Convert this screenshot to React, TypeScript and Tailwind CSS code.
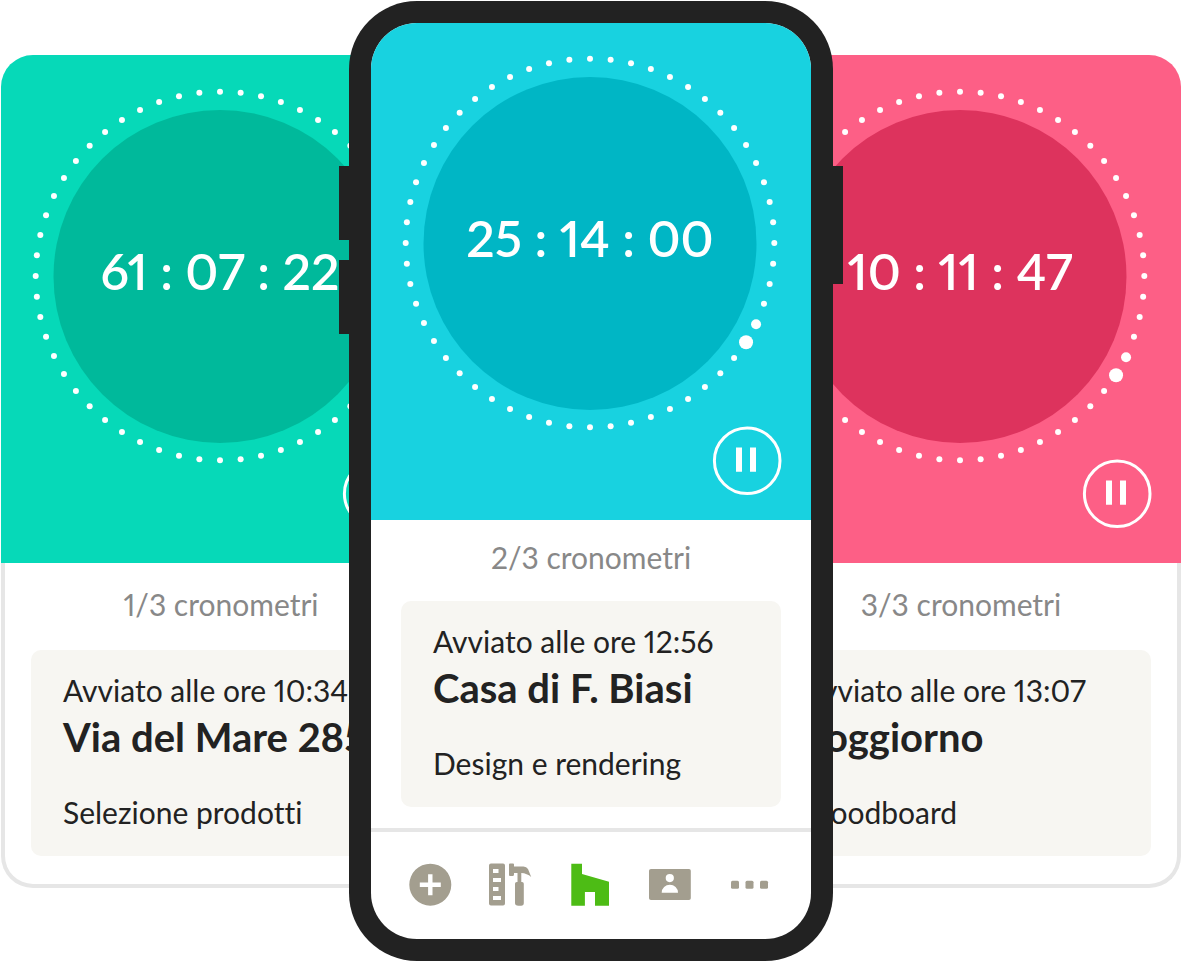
import type { ReactNode } from "react";

type Timer = {
  time: string;
  position: string;
  started: string;
  project: string;
  task: string;
};

const timers: Timer[] = [
  { time: "61 : 07 : 22", position: "1/3 cronometri", started: "Avviato alle ore 10:34", project: "Via del Mare 285", task: "Selezione prodotti" },
  { time: "25 : 14 : 00", position: "2/3 cronometri", started: "Avviato alle ore 12:56", project: "Casa di F. Biasi", task: "Design e rendering" },
  { time: "10 : 11 : 47", position: "3/3 cronometri", started: "Avviato alle ore 13:07", project: "Soggiorno", task: "Moodboard" },
];

const DOTS = 56;
const RING = 184.3;

function Dial({ time, face }: { time: string; face: string }) {
  return (
    <div className="grid place-items-center self-center pr-0.5">
      <svg className="col-start-1 row-start-1 size-[380px]" viewBox="-190 -190 380 380" aria-hidden="true">
        <circle cx="0" cy="0.5" r="166.5" className={face} />
        {Array.from({ length: DOTS }, (_, i) => {
          const a = (i * 2 * Math.PI) / DOTS;
          const r = i === 4 ? 5 : i === 5 ? 7 : 3;
          const drop = r > 3 ? 1.2 : 0;
          return <circle key={i} cx={Math.cos(a) * RING} cy={Math.sin(a) * RING + drop} r={r} fill="#fff" />;
        })}
      </svg>
      <p className="col-start-1 row-start-1 pb-2.5 text-[50px] leading-[60px] font-semibold whitespace-nowrap text-white">{time}</p>
    </div>
  );
}

function PauseButton() {
  return (
    <button type="button" aria-label="Pausa" className="mr-[29px] size-[70px] self-end">
      <svg viewBox="0 0 70 70" className="size-full" aria-hidden="true">
        <circle cx="35.2" cy="34.8" r="32.8" fill="none" stroke="#fff" strokeWidth="3" />
        <path d="M24 21.500h6v24.300h-6zM38 21.500h6v24.300h-6z" fill="#fff" />
      </svg>
    </button>
  );
}

function Details({ timer }: { timer: Timer }) {
  return (
    <div className="rounded-[10px] bg-[#f7f6f2] px-8 pt-5 pb-6 text-[30px] leading-10 whitespace-nowrap text-[#222]">
      <p>{timer.started}</p>
      <h2 className="pt-0.5 text-[40px] leading-[50px] font-bold">{timer.project}</h2>
      <p className="pt-[30px]">{timer.task}</p>
    </div>
  );
}

function SideCard({ timer, color, face }: { timer: Timer; color: string; face: string }) {
  return (
    <article className="w-[440px] overflow-hidden">
      <div className={`flex flex-col rounded-t-[32px] pt-[31px] pb-[34px] ${color}`}>
        <Dial time={timer.time} face={face} />
        <div className="-mt-[7px] flex flex-col">
          <PauseButton />
        </div>
      </div>
      <div className="rounded-b-[32px] border-4 border-t-0 border-[#e6e6e6] bg-white px-[26px] pt-[21px] pb-7">
        <p className="pb-[26px] text-center text-[30px] leading-10 text-[#888]">{timer.position}</p>
        <Details timer={timer} />
      </div>
    </article>
  );
}

function NavItem({ label, children }: { label: string; children: ReactNode }) {
  return (
    <a href="#" aria-label={label} className="flex flex-1 justify-center">
      <svg viewBox="0 0 42 42" className="size-[42px] overflow-visible" fill="#a39e8f" aria-hidden="true">
        {children}
      </svg>
    </a>
  );
}

function Phone({ timer }: { timer: Timer }) {
  return (
    <div className="flex">
      <div className="flex flex-col gap-5 pt-[165px]">
        <span className="h-[74px] w-[10px] bg-[#222]" />
        <span className="h-[74px] w-[10px] bg-[#222]" />
      </div>
      <main className="w-[484px] rounded-[68px] bg-[#222] p-[22px]">
        <div className="overflow-hidden rounded-[46px] bg-white">
          <div className="flex flex-col bg-[#18d2e0] pt-[30px] pb-6">
            <Dial time={timer.time} face="fill-[#00b6c5]" />
            <div className="-mt-[7px] flex flex-col">
              <PauseButton />
            </div>
          </div>
          <div className="border-b-4 border-[#e6e6e6] px-[30px] pt-[17px] pb-[21px]">
            <p className="pb-6 text-center text-[30px] leading-10 text-[#888]">{timer.position}</p>
            <Details timer={timer} />
          </div>
          <nav className="flex px-5 pt-8 pb-[33px]">
            <NavItem label="Aggiungi">
              <path fillRule="evenodd" d="M20.300-.3a21 21 0 1 0 0 42a21 21 0 1 0 0-42zM18.100 10.200h4.400v8.300h8.300v4.400h-8.300v8.300h-4.400v-8.300H9.800v-4.400h8.300z" />
            </NavItem>
            <NavItem label="Strumenti">
              <path fillRule="evenodd" d="M1-.4h12q2 0 2 2v38q0 2-2 2H1q-2 0-2-2v-38q0-2 2-2zM3 5v4h5.500v-4zM3 14v4h8v-4zM3 23v4h5.500v-4zM3 32v4h8v-4z" />
              <path d="M20-.4h3q1 0 1 1v1.900h9.500q3 0 4.500 2.500l3.200 8q-4.200-3.700-9.900-4v9h.7q1.800 0 1.800 1.800V39q0 2.700-2.700 2.700h-2.600Q25 41.700 25 39V19.800q0-1.800 1.800-1.800h.7V9H24v1.500q0 1.500-1.500 1.500H20q-1 0-1-1V.6q0-1 1-1z" />
            </NavItem>
            <NavItem label="Home">
              <path fill="#4dbc15" d="M1.300-.3H12v10.300l27 7.700v24H25V28H14.900v13.700H1.300z" />
            </NavItem>
            <NavItem label="Contatti">
              <path fillRule="evenodd" d="M1 5h38q1.800 0 1.800 1.800v27.400q0 1.800-1.800 1.800H1q-2 0-2-1.800V6.800Q-1 5 1 5zM19.800 10a4.100 4.100 0 1 0 0 8.200a4.100 4.100 0 1 0 0-8.200zM11.700 28.700H28a8.150 8 0 0 0-16.300 0z" />
            </NavItem>
            <NavItem label="Altro">
              <rect x="1" y="16.700" width="8" height="8" rx="1.500" />
              <rect x="15.500" y="16.700" width="8" height="8" rx="1.500" />
              <rect x="30" y="16.700" width="8" height="8" rx="1.500" />
            </NavItem>
          </nav>
        </div>
      </main>
      <div className="pt-[165px]">
        <span className="block h-[118px] w-[10px] bg-[#222]" />
      </div>
    </div>
  );
}

export default function App() {
  return (
    <div className="min-h-screen bg-white font-['Lato',sans-serif] proportional-nums [font-variant-ligatures:none]">
      <div className="mx-auto grid max-w-[1181px] pt-px pl-px">
        <div className="col-start-1 row-start-1 flex items-start justify-between pt-[54px]">
          <SideCard timer={timers[0]} color="bg-[#06d9b8]" face="fill-[#00b99b]" />
          <SideCard timer={timers[2]} color="bg-[#fd5f86]" face="fill-[#dd335d]" />
        </div>
        <div className="z-10 col-start-1 row-start-1 justify-self-center">
          <Phone timer={timers[1]} />
        </div>
      </div>
    </div>
  );
}
